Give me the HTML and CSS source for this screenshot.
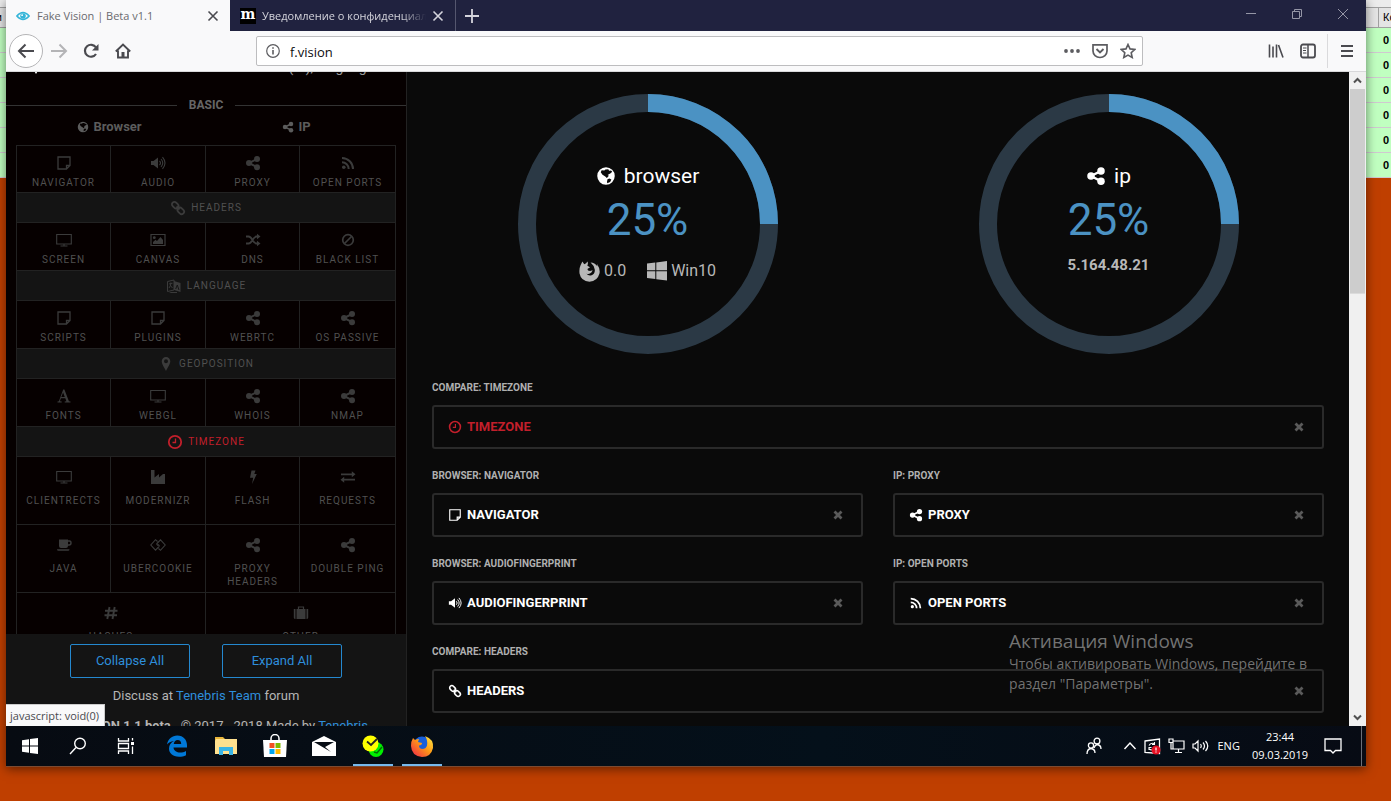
FILE: index.html
```html
<!DOCTYPE html>
<html lang="ru">
<head>
<meta charset="utf-8">
<title>Fake Vision | Beta v1.1</title>
<link rel="stylesheet" href="styles.css">
</head>
<body>
<svg class="sprite" aria-hidden="true">
  <symbol id="note" viewBox="0 0 16 16"><path d="M2 2h12v8.500l-3.500 3.500H2zM14 10.500h-3.500V14" fill="none" stroke="currentColor" stroke-width="1.300"/></symbol>
  <symbol id="audio" viewBox="0 0 16 16"><path d="M1 6h2.500L8 2.500v11L3.500 10H1z" fill="currentColor"/><path d="M9.500 6q2 2 0 4M11 4q3.500 4 0 8M12.500 2.200q5 5.800 0 11.600" fill="none" stroke="currentColor" stroke-width="1.100"/></symbol>
  <symbol id="share" viewBox="0 0 16 16"><g fill="currentColor"><circle cx="4" cy="8" r="3"/><circle cx="12" cy="4" r="3"/><circle cx="12" cy="12.200" r="3"/></g><path d="M12 4 4 8l8 4.200" fill="none" stroke="currentColor" stroke-width="2"/></symbol>
  <symbol id="rss" viewBox="0 0 16 16"><circle cx="3.800" cy="12.200" r="1.800" fill="currentColor"/><path d="M2 7.300a6.700 6.700 0 0 1 6.700 6.700M2 3a11 11 0 0 1 11 11" fill="none" stroke="currentColor" stroke-width="2"/></symbol>
  <symbol id="link" viewBox="0 0 16 16"><g fill="none" stroke="currentColor" stroke-width="1.800"><rect x="1.600" y="2.600" width="7.200" height="5" rx="2.500" transform="rotate(45 5.200 5.100)"/><rect x="7.200" y="8.400" width="7.200" height="5" rx="2.500" transform="rotate(45 10.800 10.900)"/><path d="m6.500 6.500 3 3"/></g></symbol>
  <symbol id="screen" viewBox="0 0 16 16"><path d="M.700 2.500h14.600v9.500H.700zM8 12v2M4.500 14h7" fill="none" stroke="currentColor" stroke-width="1.100"/></symbol>
  <symbol id="image" viewBox="0 0 16 16"><path d="M1 2.500h14v11H1z" fill="none" stroke="currentColor" stroke-width="1.200"/><circle cx="4.300" cy="5.700" r="1.400" fill="currentColor"/><path d="M3 12V10l2.500-2.300L7 9l3.500-4L13 8v4z" fill="currentColor"/></symbol>
  <symbol id="shuffle" viewBox="0 0 16 16"><path d="M1 4.500h2.500c4 0 4 7 8 7H13M1 11.500h2.500c4 0 4-7 8-7H13" fill="none" stroke="currentColor" stroke-width="1.800"/><path d="M12 1.700 15.500 4.500 12 7.300zM12 8.700l3.500 2.800-3.500 2.800z" fill="currentColor"/></symbol>
  <symbol id="ban" viewBox="0 0 16 16"><circle cx="8" cy="8" r="5.300" fill="none" stroke="currentColor" stroke-width="1.700"/><path d="m4.500 11.500 7-7" stroke="currentColor" stroke-width="1.700"/></symbol>
  <symbol id="lang" viewBox="0 0 16 16"><path d="M1.500 3.500 8 2v10l-6.500 1.500z" fill="none" stroke="currentColor"/><path d="M8 3l6.500 2v9L8 12zM3 15h8v-1H5z" fill="currentColor"/><path d="m3 6 3.500-.800M4.800 4.500Q5 8 3 10M4 7l2.500 3" stroke="currentColor" fill="none"/><path d="m9.700 11 1.600-4 1.700 5" stroke="#141414" fill="none"/></symbol>
  <symbol id="pin" viewBox="0 0 16 16"><path d="M8 1a4.300 4.300 0 0 0-4.300 4.300C3.700 8 6.500 12 8 15c1.500-3 4.300-7 4.300-9.700A4.300 4.300 0 0 0 8 1zm0 6.300a2 2 0 1 1 0-4 2 2 0 0 1 0 4z" fill="currentColor"/></symbol>
  <symbol id="font" viewBox="0 0 16 16"><path d="M7.200 1.500h1.200l4.500 11.700 1.600.400v.900H8.700v-.900l1.700-.400-1.100-3H4.900l-1 3 1.800.400v.900H1.500v-.900l1.400-.400zm-.100 2.900L5.300 9h3.500z" fill="currentColor"/></symbol>
  <symbol id="clock" viewBox="0 0 16 16"><circle cx="8" cy="8" r="6.200" fill="none" stroke="currentColor" stroke-width="1.800"/><path d="M8.500 4.500v4H5.500" fill="none" stroke="currentColor" stroke-width="1.300"/></symbol>
  <symbol id="industry" viewBox="0 0 16 16"><path d="M1 15V1h3.500v7.500L9 5v3.500L13 5h2v10z" fill="currentColor"/></symbol>
  <symbol id="bolt" viewBox="0 0 16 16"><path d="M6.500 1.500h4L9.300 5h2.500L7 15l1.200-6.300H5z" fill="currentColor"/></symbol>
  <symbol id="exchange" viewBox="0 0 16 16"><path d="M1 5.300h12M3 10.700h12" stroke="currentColor" stroke-width="1.800"/><path d="m11.800 2.300 3.700 3-3.700 3zM4.200 7.700.500 10.700l3.700 3z" fill="currentColor"/></symbol>
  <symbol id="coffee" viewBox="0 0 16 16"><path d="M3 2.500h9V9q0 2-2 2H5q-2 0-2-2zM1 12.300h12.500q0 1.500-1.500 1.500H2.500Q1 13.800 1 12.300z" fill="currentColor"/><path d="M12 4h1.500q1.500 0 1.500 2t-2 2h-1" fill="none" stroke="currentColor" stroke-width="1.400"/></symbol>
  <symbol id="cookie" viewBox="0 0 16 16"><path d="M7.500 4.500 5.500 2.700.800 8l4.700 5.200L9.500 9M8.500 11.500l2 1.800L15.200 8l-4.700-5.200L6.500 7M9.500 9 8 7.500M6.500 7 8 8.500" fill="none" stroke="currentColor" stroke-width="1.100"/></symbol>
  <symbol id="hash" viewBox="0 0 16 16"><path d="M6.500 2 4.300 14M11.700 2 9.500 14M2 5.800h12.500M1.500 10.200H14" stroke="currentColor" stroke-width="1.900"/></symbol>
  <symbol id="case" viewBox="0 0 16 16"><path d="M.800 4h1.700v10q-1.700 0-1.700-1.500zM3.500 4h9v10h-9zM13.500 4h1.700v8.500q0 1.500-1.700 1.500z" fill="currentColor"/><path d="M5.500 4V2h5v2" fill="none" stroke="currentColor" stroke-width="1.200"/></symbol>
  <symbol id="globe" viewBox="0 0 16 16"><path fill-rule="evenodd" d="M8 1a7 7 0 1 1 0 14A7 7 0 0 1 8 1zM4.500 3.300 3.800 5l1.400 2 2.200 1.300 1.300 1.200 1.600-1.700-1-.700 2.400-1.400L13 4.500l-1-1-1.500.300-.700-1.300-2.300.200-.800.800zM9.200 10.500l-.400 2 .200 1.300 2.300-1 1-2-1.600-.900z" fill="currentColor"/></symbol>
  <symbol id="fox" viewBox="0 0 20 20"><path d="M3.200.500 5 3q2-.500 3-2.500Q9 2 8 4.500L10.500 6 8 7.500q0 2 2.500 2l2.500-.700-1 2q-2.500 2.700-5 1Q9 14.500 12 13.500q3.500-1.500 3-5.500-.500-3.500-4-6.500 4 .200 6.500 3.500L17 2.500q3.500 5 2.500 9.500-2 7.500-9.500 7.800Q2 19.500.500 12 0 7 1.500 4z" fill="currentColor"/></symbol>
  <symbol id="win" viewBox="0 0 20 20"><path d="M0 2.500 8.300 1.500v7.700H0zM9.300 1.400 20 0v9.200H9.300zM0 10.200h8.300V18L0 17zM9.300 10.200H20V19.600L9.300 18.200z" fill="currentColor"/></symbol>
  <symbol id="times" viewBox="0 0 10 10"><path d="m1.500 1.500 7 7m0-7-7 7" stroke="currentColor" stroke-width="2.800"/></symbol>
  <symbol id="close" viewBox="0 0 12 12"><path d="m1.500 1.500 9 9m0-9-9 9" stroke="currentColor" stroke-width="1.600"/></symbol>
</svg>

<table class="sheet">
  <colgroup><col class="col-edge"><col><col class="col-count"></colgroup>
  <thead>
    <tr class="strip"><td></td><td></td><td></td></tr>
    <tr><th><div class="tail">и</div></th><th></th><th class="count">Количество</th></tr>
  </thead>
  <tbody>
    <tr><td></td><td></td><td class="count">0</td></tr>
    <tr><td></td><td></td><td class="count">0</td></tr>
    <tr><td></td><td></td><td class="count">0</td></tr>
    <tr><td></td><td></td><td class="count">0</td></tr>
    <tr><td></td><td></td><td class="count">0</td></tr>
    <tr><td></td><td></td><td class="count">0</td></tr>
  </tbody>
</table>

<div class="window">
  <header class="tabs">
    <div class="tab active">
      <svg class="favicon" viewBox="0 0 16 16"><path d="M1 8q7-8 14 0-7 8-14 0z" fill="none" stroke="#35b5d8" stroke-width="1.800"/><circle cx="8" cy="8" r="3.200" fill="#35b5d8"/><circle cx="7" cy="7" r="1" fill="#fff"/></svg>
      <span class="tab-title">Fake Vision | Beta v1.1</span>
      <button class="icon-btn" aria-label="Закрыть вкладку"><svg width="12" height="12"><use href="#close"/></svg></button>
    </div>
    <div class="tab">
      <span class="favicon m-logo">m</span>
      <span class="tab-title faded">Уведомление о конфиденциальности</span>
      <button class="icon-btn" aria-label="Закрыть вкладку"><svg width="12" height="12"><use href="#close"/></svg></button>
    </div>
    <button class="icon-btn new-tab" aria-label="Новая вкладка"><svg width="14" height="14" viewBox="0 0 14 14"><path d="M7 0v14M0 7h14" stroke="currentColor" stroke-width="1.800"/></svg></button>
    <div class="controls">
      <button class="icon-btn" aria-label="Свернуть"><svg width="12" height="12" viewBox="0 0 12 12"><path d="M1 5.500h10" stroke="currentColor"/></svg></button>
      <button class="icon-btn" aria-label="Восстановить"><svg width="12" height="12" viewBox="0 0 12 12"><path d="M1.500 3.500h7v7h-7zM3.500 3.500v-2h7v7h-2" fill="none" stroke="currentColor"/></svg></button>
      <button class="icon-btn" aria-label="Закрыть"><svg width="12" height="12" viewBox="0 0 12 12"><path d="m1 1 10 10M11 1 1 11" stroke="currentColor"/></svg></button>
    </div>
  </header>

  <div class="toolbar">
    <div class="nav-buttons">
      <button class="icon-btn back" aria-label="Назад"><svg width="18" height="16" viewBox="0 0 18 16"><path d="M17 8H2M8.500 1.500 2 8l6.500 6.500" fill="none" stroke="currentColor" stroke-width="2"/></svg></button>
      <button class="icon-btn forward" aria-label="Вперёд"><svg width="18" height="16" viewBox="0 0 18 16"><path d="M1 8h15M9.500 1.500 16 8l-6.500 6.500" fill="none" stroke="currentColor" stroke-width="2"/></svg></button>
      <button class="icon-btn" aria-label="Обновить"><svg width="16" height="16" viewBox="0 0 16 16"><path d="M13 11A6 6 0 1 1 13 4.500" fill="none" stroke="currentColor" stroke-width="2.200"/><path d="M15.500 1v6.500H9z" fill="currentColor"/></svg></button>
      <button class="icon-btn" aria-label="Домой"><svg width="16" height="16" viewBox="0 0 16 16"><path d="M.800 8.500 8 1.500l7.200 7M3 7.500v7h10v-7" fill="none" stroke="currentColor" stroke-width="1.900"/><path d="M6.500 9h3v5.500h-3z" fill="currentColor"/></svg></button>
    </div>
    <div class="urlbar">
      <svg width="14" height="14" viewBox="0 0 14 14"><circle cx="7" cy="7" r="6.300" fill="none" stroke="currentColor" stroke-width="1.200"/><path d="M7 3.300v1.500M7 6v4.500" stroke="currentColor" stroke-width="1.600"/></svg>
      <input type="text" value="f.vision" aria-label="Адрес">
      <button class="icon-btn" aria-label="Действия"><svg width="16" height="16" viewBox="0 0 16 16"><g fill="currentColor"><circle cx="2" cy="8" r="1.900"/><circle cx="8" cy="8" r="1.900"/><circle cx="14" cy="8" r="1.900"/></g></svg></button>
      <button class="icon-btn" aria-label="Pocket"><svg width="16" height="16" viewBox="0 0 16 16"><path d="M1 1.800h14V8a7 6.500 0 0 1-14 0z" fill="none" stroke="currentColor" stroke-width="1.700"/><path d="m4.500 6 3.500 3.500L11.500 6" fill="none" stroke="currentColor" stroke-width="1.900"/></svg></button>
      <button class="icon-btn" aria-label="Закладка"><svg width="16" height="16" viewBox="0 0 16 16"><path d="m8 1.500 2 4.400 4.800.500-3.600 3.300 1 4.800L8 12.100l-4.200 2.400 1-4.800L1.200 6.400 6 5.900z" fill="none" stroke="currentColor" stroke-width="1.600"/></svg></button>
    </div>
    <div class="tools">
      <button class="icon-btn" aria-label="Библиотека"><svg width="16" height="16" viewBox="0 0 16 16"><path d="M1.500 1.500v13M5 3.500v11M8.500 1.500v13M10.500 2l4.500 12.500" stroke="currentColor" stroke-width="1.600"/></svg></button>
      <button class="icon-btn" aria-label="Боковая панель"><svg width="16" height="16" viewBox="0 0 16 16"><rect x="1" y="1.500" width="14" height="13" rx="2" fill="none" stroke="currentColor" stroke-width="1.800"/><path d="M8 2v12" stroke="currentColor" stroke-width="1.500"/><path d="M3 5h3.500M3 7.500h3M3 10h3.500" stroke="currentColor"/></svg></button>
      <button class="icon-btn menu" aria-label="Меню"><svg width="14" height="14" viewBox="0 0 14 14"><path d="M1 2h12M1 7h12M1 12h12" stroke="currentColor" stroke-width="1.800"/></svg></button>
    </div>
  </div>

  <div class="viewport">
    <aside class="sidebar">
      <div class="side-scroll">
        <div class="lang-row"><svg width="6" height="6" viewBox="0 0 6 6"><path d="M0 0h6L3 5z" fill="#fff"/></svg><span>(ru), language</span></div>
        <h3 class="rule">BASIC</h3>
        <div class="groups">
          <span><svg width="12" height="12"><use href="#globe"/></svg>Browser</span>
          <span><svg width="12" height="12"><use href="#share"/></svg>IP</span>
        </div>
        <nav class="tiles">
          <a class="first" href="#n"><svg><use href="#note"/></svg>NAVIGATOR</a>
          <a class="first" href="#a"><svg><use href="#audio"/></svg>AUDIO</a>
          <a class="first" href="#p"><svg><use href="#share"/></svg>PROXY</a>
          <a class="first" href="#o"><svg><use href="#rss"/></svg>OPEN PORTS</a>
          <a class="wide" href="#h"><svg><use href="#link"/></svg>HEADERS</a>
          <a href="#s"><svg><use href="#screen"/></svg>SCREEN</a>
          <a href="#c"><svg><use href="#image"/></svg>CANVAS</a>
          <a href="#d"><svg><use href="#shuffle"/></svg>DNS</a>
          <a href="#b"><svg><use href="#ban"/></svg>BLACK LIST</a>
          <a class="wide" href="#l"><svg><use href="#lang"/></svg>LANGUAGE</a>
          <a href="#sc"><svg><use href="#note"/></svg>SCRIPTS</a>
          <a href="#pl"><svg><use href="#note"/></svg>PLUGINS</a>
          <a href="#w"><svg><use href="#share"/></svg>WEBRTC</a>
          <a href="#os"><svg><use href="#share"/></svg>OS PASSIVE</a>
          <a class="wide" href="#g"><svg><use href="#pin"/></svg>GEOPOSITION</a>
          <a href="#f"><svg><use href="#font"/></svg>FONTS</a>
          <a href="#gl"><svg><use href="#screen"/></svg>WEBGL</a>
          <a href="#wh"><svg><use href="#share"/></svg>WHOIS</a>
          <a href="#nm"><svg><use href="#share"/></svg>NMAP</a>
          <a class="wide alert" href="#tz"><svg><use href="#clock"/></svg>TIMEZONE</a>
          <a class="tall" href="#cr"><svg><use href="#screen"/></svg>CLIENTRECTS</a>
          <a class="tall" href="#mo"><svg><use href="#industry"/></svg>MODERNIZR</a>
          <a class="tall" href="#fl"><svg><use href="#bolt"/></svg>FLASH</a>
          <a class="tall" href="#re"><svg><use href="#exchange"/></svg>REQUESTS</a>
          <a class="tall" href="#ja"><svg><use href="#coffee"/></svg>JAVA</a>
          <a class="tall" href="#ub"><svg><use href="#cookie"/></svg>UBERCOOKIE</a>
          <a class="tall" href="#ph"><svg><use href="#share"/></svg><span>PROXY<br>HEADERS</span></a>
          <a class="tall" href="#dp"><svg><use href="#share"/></svg>DOUBLE PING</a>
          <a class="tall half" href="#ha"><svg><use href="#hash"/></svg>HASHES</a>
          <a class="tall half" href="#ot"><svg><use href="#case"/></svg>OTHER</a>
        </nav>
      </div>
      <footer class="side-footer">
        <div class="actions"><button>Collapse All</button><button>Expand All</button></div>
        <p>Discuss at <a href="#team">Tenebris Team</a> forum</p>
        <p class="credits"><b>FAKE VISION 1.1 beta</b> - © 2017 - 2018 Made by <a href="#team">Tenebris</a></p>
      </footer>
      <div class="status">javascript: void(0)</div>
    </aside>

    <main class="content">
      <div class="gauges">
        <section class="gauge">
          <svg width="260" height="260" viewBox="0 0 260 260"><circle cx="130" cy="130" r="121" fill="none" stroke="#2b3945" stroke-width="18"/><path d="M130 9a121 121 0 0 1 121 121" fill="none" stroke="#4b92c3" stroke-width="18"/></svg>
          <div class="gauge-text">
            <h2><svg width="20" height="20"><use href="#globe"/></svg>browser</h2>
            <div class="percent">25%</div>
            <div class="meta"><span><svg width="21" height="21"><use href="#fox"/></svg>0.0</span><span><svg width="20" height="20"><use href="#win"/></svg>Win10</span></div>
          </div>
        </section>
        <section class="gauge">
          <svg width="260" height="260" viewBox="0 0 260 260"><circle cx="130" cy="130" r="121" fill="none" stroke="#2b3945" stroke-width="18"/><path d="M130 9a121 121 0 0 1 121 121" fill="none" stroke="#4b92c3" stroke-width="18"/></svg>
          <div class="gauge-text">
            <h2><svg width="20" height="20"><use href="#share"/></svg>ip</h2>
            <div class="percent">25%</div>
            <div class="address">5.164.48.21</div>
          </div>
        </section>
      </div>
      <div class="panels">
        <section class="panel full"><h3>COMPARE: TIMEZONE</h3><div class="card alert"><svg width="14" height="14"><use href="#clock"/></svg><span>TIMEZONE</span><button class="icon-btn" aria-label="Close"><svg width="10" height="10"><use href="#times"/></svg></button></div></section>
        <section class="panel"><h3>BROWSER: NAVIGATOR</h3><div class="card"><svg width="14" height="14"><use href="#note"/></svg><span>NAVIGATOR</span><button class="icon-btn" aria-label="Close"><svg width="10" height="10"><use href="#times"/></svg></button></div></section>
        <section class="panel"><h3>IP: PROXY</h3><div class="card"><svg width="14" height="14"><use href="#share"/></svg><span>PROXY</span><button class="icon-btn" aria-label="Close"><svg width="10" height="10"><use href="#times"/></svg></button></div></section>
        <section class="panel"><h3>BROWSER: AUDIOFINGERPRINT</h3><div class="card"><svg width="14" height="14"><use href="#audio"/></svg><span>AUDIOFINGERPRINT</span><button class="icon-btn" aria-label="Close"><svg width="10" height="10"><use href="#times"/></svg></button></div></section>
        <section class="panel"><h3>IP: OPEN PORTS</h3><div class="card"><svg width="14" height="14"><use href="#rss"/></svg><span>OPEN PORTS</span><button class="icon-btn" aria-label="Close"><svg width="10" height="10"><use href="#times"/></svg></button></div></section>
        <section class="panel full"><h3>COMPARE: HEADERS</h3><div class="card"><svg width="14" height="14"><use href="#link"/></svg><span>HEADERS</span><button class="icon-btn" aria-label="Close"><svg width="10" height="10"><use href="#times"/></svg></button></div></section>
      </div>
    </main>

    <div class="scrollbar">
      <svg width="17" height="17" viewBox="0 0 17 17"><path d="m5 10.500 3.500-3.500 3.500 3.500" fill="none" stroke="#505050" stroke-width="2"/></svg>
      <div class="thumb"></div>
      <svg width="17" height="17" viewBox="0 0 17 17"><path d="M5 6.500 8.500 10 12 6.500" fill="none" stroke="#505050" stroke-width="2"/></svg>
    </div>
    <div class="watermark"><div class="wm-title">Активация Windows</div>Чтобы активировать Windows, перейдите в<br>раздел "Параметры".</div>
  </div>

  <footer class="taskbar">
    <div class="system">
      <button aria-label="Пуск"><svg width="16" height="16" viewBox="0 0 16 16" fill="#fff"><path d="M0 2.200 7 1.200V7.500H0zM8 1 16 0v7.500H8zM0 8.500h7v6.300L0 13.800zM8 8.500h8V16L8 15z"/></svg></button>
      <button aria-label="Поиск"><svg width="18" height="18" viewBox="0 0 18 18" fill="none" stroke="#fff" stroke-width="1.400"><circle cx="11" cy="6.500" r="5.300"/><path d="M7 10.500 1 17"/></svg></button>
      <button aria-label="Представление задач"><svg width="18" height="18" viewBox="0 0 18 18" fill="none" stroke="#fff" stroke-width="1.300"><path d="M1.500 1v3h10V1M1.500 17v-3h10v3M1.500 6.500h10v5h-10zM15.500 1v2.500M15.500 9.500V17"/><path d="M14 5h3v3h-3z" fill="#fff" stroke="none"/></svg></button>
    </div>
    <div class="apps">
      <button aria-label="Edge"><svg width="22" height="22" viewBox="0 0 22 22"><path d="M1 9.500C2 4 6 .500 11.300.500 17.500.500 21 5 21 10v2.500H7.500c.300 3.500 3.500 5 6.500 5 2.300 0 4.300-.600 6-1.600v4.300c-2 1-4.500 1.500-7 1.500C6.500 21.700 3 18 3 13.500c0-3.500 2-6 5-7.500C4.500 6.300 2.500 8 1 9.500zM7.700 9h7.500c0-2.500-1.300-4-3.500-4S8.300 6.500 7.700 9z" fill="#0078d7"/></svg></button>
      <button aria-label="Проводник"><svg width="22" height="20" viewBox="0 0 22 20"><path d="M0 1h8l2 2h12v15H0z" fill="#e8b53a"/><path d="M1 3h21v15H0V5z" fill="#ffe18f"/><path d="M4 19v-8h14v8h-4v-4H8v4z" fill="#3ab5e6"/></svg></button>
      <button aria-label="Магазин"><svg width="24" height="24" viewBox="0 0 24 24"><path d="M8 8V4.500a4 4 0 0 1 8 0V8" fill="none" stroke="#fff" stroke-width="1.500"/><path d="M0 6h24l-1 17H1z" fill="#fff"/><path d="M6.500 9h5v5h-5z" fill="#f25022"/><path d="M12.500 9h5v5h-5z" fill="#7fba00"/><path d="M6.500 15h5v5h-5z" fill="#00a4ef"/><path d="M12.500 15h5v5h-5z" fill="#ffb900"/></svg></button>
      <button aria-label="Почта"><svg width="24" height="20" viewBox="0 0 24 20"><path d="M0 6 12 0l12 6v14H0z" fill="#fff"/><path d="M2 6h20l-9 5 6 5z" fill="#070d15"/></svg></button>
      <button class="running" aria-label="Punto Switcher"><svg width="22" height="22" viewBox="0 0 22 22"><circle cx="14" cy="14.500" r="7.500" fill="#00f000"/><path d="m12 17 3 1 5-6" fill="none" stroke="#056b05" stroke-width="1.500"/><circle cx="8.500" cy="8.500" r="8" fill="#ff0"/><path d="M5 6.500 9 10l6-6" fill="none" stroke="#222" stroke-width="1.800"/></svg></button>
      <button class="running" aria-label="Firefox"><svg width="24" height="24" viewBox="0 0 24 24"><defs><linearGradient id="ffg" x1="1" y1="0" x2="0" y2="1"><stop offset="0" stop-color="#fff04a"/><stop offset=".45" stop-color="#ff9a16"/><stop offset="1" stop-color="#ef1f4c"/></linearGradient></defs><circle cx="12" cy="11" r="8.500" fill="#175fdc"/><path d="M3 4q1 1 2 2 2-1 4-1L8 8l4 1q0 2-3 2.500 0 3 3 3.500 4 0 5-3.500Q18 6 15 2q9 3 8 12-2 9-11 9Q1.500 22 1 12q0-5 2-8z" fill="url(#ffg)"/></svg></button>
    </div>
    <div class="tray">
      <svg width="16" height="18" viewBox="0 0 16 18" fill="none" stroke="#fff" stroke-width="1.300"><circle cx="5" cy="8.500" r="2.600"/><path d="M1 17q0-5 4-5.500Q9 12 9 16"/><circle cx="11" cy="4" r="2.900"/><path d="M8 11q1-3 3-3.500Q15 8 15 12"/></svg>
      <svg class="chevron" width="14" height="14" viewBox="0 0 14 14" fill="none" stroke="#fff" stroke-width="1.400"><path d="m1.500 10 5.500-6 5.500 6"/></svg>
      <svg width="17" height="17" viewBox="0 0 17 17"><path d="M1 3 15.500 1v14.500L1 14.500z" fill="none" stroke="#fff" stroke-width="1.300"/><path d="M5 7.500q1.500-3 5-2M10.500 4v2.500H8M5 12V9.500h2.500M5 11q2 1.500 4 .500" stroke="#fff" fill="none" stroke-width="1.100"/><circle cx="12" cy="12" r="4.500" fill="#e81123"/><path d="M12 9.500v3M12 13.500v1" stroke="#fff" stroke-width="1.200"/></svg>
      <svg width="17" height="16" viewBox="0 0 17 16" fill="none" stroke="#fff" stroke-width="1.200"><path d="M5 3h11v8H5zM10.500 11v3.500M7 14.500h7M1 1h4v3.500H1zM3 4.500V11h2"/></svg>
      <svg width="18" height="16" viewBox="0 0 18 16" fill="none" stroke="#fff" stroke-width="1.200"><path d="M1 6h2l3-3v10l-3-3H1zM8.500 6q1.500 2 0 4M11 4.500q3 3.500 0 7M13.500 3q4.500 5 0 10"/></svg>
      <span class="layout">ENG</span>
      <div class="time">23:44<br>09.03.2019</div>
      <svg class="bell" width="18" height="18" viewBox="0 0 18 18" fill="none" stroke="#fff" stroke-width="1.300"><path d="M1 2h16v11.500h-5.500L9 16l-2.500-2.500H1z"/></svg>
      <div class="peek"></div>
    </div>
  </footer>
</div>
</body>
</html>
```
FILE: styles.css
```css
* { box-sizing: border-box; }
body {
  margin: 0;
  height: 100vh;
  position: relative;
  overflow: hidden;
  background: #bf3f00;
  font: 13px/16px "Open Sans", "Noto Sans", sans-serif;
}
button, input { font: inherit; color: inherit; }
button { background: none; border: 0; padding: 0; }
a { color: inherit; text-decoration: none; }
h2, h3, p { margin: 0; }
svg { display: block; flex: none; }
.sprite { position: absolute; width: 0; height: 0; }
.icon-btn { display: flex; align-items: center; justify-content: center; flex: none; }

.sheet { width: 100%; table-layout: fixed; border-collapse: separate; border-spacing: 0; font: 11px/13px "Liberation Sans", sans-serif; }
.col-edge { width: 6px; }
.col-count { width: 13px; }
.sheet tr { height: 25px; background: #c0ffc0; }
.sheet td, .sheet th { padding: 0; border-bottom: 1px solid #d0c8d0; overflow: hidden; white-space: nowrap; font-weight: normal; }
.sheet thead tr { height: 20px; background: #e4e4e4; }
.sheet thead .strip { height: 8px; background: #ececec; }
.sheet thead td, .sheet thead th { border-bottom-color: #a0a0a0; }
.sheet .count { padding-left: 4px; text-align: left; }
.sheet td.count { padding-left: 5px; font-weight: bold; }
.sheet th.count { border-left: 1px solid #a0a0a0; }
.tail { display: flex; justify-content: flex-end; padding-right: 4px; }

.window {
  position: absolute;
  inset: 0 25px 34px 6px;
  display: flex;
  flex-direction: column;
  background: #0a0a0a;
  border-bottom: 1px solid #7d4a30;
  box-shadow: 0 2px 10px rgba(0, 0, 0, .5);
}

.tabs { display: flex; flex: 0 0 31px; background: #20223f; color: #d4d4dc; font-size: 12px; }
.tab { display: flex; align-items: center; width: 226px; padding: 0 5px 0 10px; border-right: 1px solid #55576f; }
.tab.active { width: 224px; background: #f9f9fa; color: #6a6a6e; border: 0; }
.tab .icon-btn { width: 24px; height: 24px; color: #d4d4dc; }
.tab.active .icon-btn { color: #4a4a4f; }
.favicon { width: 16px; height: 16px; margin-right: 6px; flex: none; }
.active .favicon { width: 14px; height: 14px; margin-right: 7px; }
.m-logo { background: #000; color: #fff; font: bold 14px/12px "DejaVu Serif", serif; text-align: center; }
.tab-title { flex: 1; min-width: 0; overflow: hidden; white-space: nowrap; font-size: 11px; }
.faded { mask-image: linear-gradient(90deg, #000 85%, transparent); }
.new-tab { width: 32px; }
.controls { display: flex; margin-left: auto; color: #9596a6; padding-bottom: 3px; }
.controls .icon-btn { width: 46px; }

.toolbar { display: flex; align-items: center; flex: 0 0 41px; background: #f9f9fa; border-bottom: 1px solid #d8d8da; color: #4a4a4f; }
.nav-buttons { display: flex; align-items: center; width: 250px; padding-left: 3px; }
.nav-buttons .icon-btn { width: 32px; height: 32px; }
.nav-buttons .back { width: 34px; height: 34px; border: 1px solid #b5b5b7; border-radius: 50%; background: #fff; }
.nav-buttons .forward { color: #b4b4b6; }
.urlbar { display: flex; flex: 1; align-items: center; height: 30px; padding: 0 6px 0 9px; background: #fff; border: 1px solid #bdbdbf; border-radius: 2px; color: #5c5c60; }
.urlbar input { flex: 1; min-width: 0; border: 0; outline: 0; padding: 2px 10px 0; color: #0c0c0d; background: none; font-size: 13px; }
.urlbar .icon-btn { width: 16px; height: 24px; margin-left: 12px; }
.tools { display: flex; width: 223px; justify-content: flex-end; }
.tools .icon-btn { width: 32px; height: 34px; }
.tools .menu { width: 39px; margin-left: 3px; border-left: 1px solid #dadadc; }

.viewport { position: relative; display: flex; flex: 1; min-height: 0; font-family: Roboto, sans-serif; }
.sidebar { position: relative; display: flex; flex-direction: column; width: 401px; flex: none; background: #060000; border-right: 1px solid #222; overflow: hidden; }
.side-scroll { flex: 1; min-height: 0; overflow: hidden; }
.lang-row { display: flex; justify-content: space-between; align-items: flex-end; margin-top: -13px; padding: 0 32px 0 27px; color: #9a9a9a; font-size: 14px; }
.rule { display: flex; align-items: center; gap: 12px; margin-top: 22px; color: #666; font-size: 12px; }
.rule::before, .rule::after { content: ""; flex: 1; border-top: 1px solid #333; }
.groups { display: grid; grid-template-columns: 1fr 1fr; margin: 6px 16px 10px 10px; color: #5c5c5c; font-weight: bold; }
.groups span { display: flex; align-items: center; justify-content: center; gap: 4px; font-size: 13px; }
.tiles { display: grid; grid-template-columns: 94fr 95fr 94fr 96fr; margin: 0 10px; border: solid #222; border-width: 1px 0 0 1px; color: #505050; font-size: 10px; line-height: 13px; letter-spacing: 1px; text-align: center; }
.tiles a { display: flex; flex-direction: column; align-items: center; gap: 5px; height: 48px; padding: 9px 2px 0; border: solid #222; border-width: 0 1px 1px 0; }
.tiles .first { height: 47px; }
.tiles svg { width: 16px; height: 16px; color: #3b3b3b; }
.tiles .wide { grid-column: span 4; flex-direction: row; justify-content: center; gap: 5px; height: 30px; padding: 0; background: #141414; }
.tiles .tall { height: 68px; padding-top: 12px; gap: 9px; }
.tiles .half { grid-column: span 2; }
.tiles .alert, .tiles .alert svg, .alert { color: #c21f2b; }

.side-footer { flex: 0 0 92px; overflow: hidden; padding-top: 10px; background: #141414; color: #b5b5b5; text-align: center; }
.actions { display: flex; justify-content: center; gap: 32px; margin-bottom: 10px; }
.actions button { width: 120px; height: 34px; border: 1px solid #2488cf; border-radius: 2px; color: #2e8edb; }
.side-footer a { color: #2e8edb; }
.side-footer .credits { margin-top: 14px; white-space: nowrap; }
.status { position: absolute; left: 0; bottom: 0; padding: 3px 5px 2px 4px; background: #f9f9fa; border: 1px solid #ccc; border-width: 1px 1px 0 0; color: #4a4a4f; font: 11px/16px "Open Sans", sans-serif; }

.content { flex: 1; min-width: 0; padding: 22px 25px; overflow: hidden; background: #0a0a0a; }
.gauges { display: grid; grid-template-columns: 1fr 1fr; gap: 30px; justify-items: center; padding-bottom: 7px; }
.gauge { position: relative; }
.gauge-text { position: absolute; inset: 0; padding-top: 70px; display: flex; flex-direction: column; align-items: center; color: #b8b8b8; }
.gauge h2 { display: flex; align-items: center; gap: 8px; font-size: 21px; line-height: 24px; font-weight: normal; color: #fff; }
.percent { margin-top: 8px; font-size: 44px; line-height: 48px; color: #4b92c3; }
.meta { display: flex; gap: 21px; margin-top: 15px; font-size: 16px; line-height: 24px; }
.meta span { display: flex; align-items: center; gap: 4px; }
.address { margin-top: 9px; font-size: 15px; line-height: 24px; font-weight: bold; }
.panels { display: grid; grid-template-columns: 1fr 1fr; column-gap: 30px; }
.panel { padding-top: 20px; }
.panel.full { grid-column: span 2; }
.panel h3 { margin-bottom: 10px; font-size: 10px; line-height: 14px; color: #b0b0b0; }
.card { display: flex; align-items: center; gap: 5px; height: 44px; padding: 0 18px 0 14px; border: 2px solid #2a2a2a; border-radius: 3px; color: #fff; font-size: 13px; font-weight: bold; }
.card.alert { color: #c21f2b; }
.card .icon-btn { margin-left: auto; color: #5a5a5a; }

.scrollbar { display: flex; flex-direction: column; flex: 0 0 17px; background: #f0f0f0; }
.thumb { flex: 1; margin: 0 1px; background: linear-gradient(#cdcdcd, #cdcdcd) no-repeat 0 0 / 100% 33%; }
.watermark { position: absolute; right: 59px; bottom: 32px; color: rgba(150, 150, 150, .75); font: 14px/20px "Open Sans", sans-serif; pointer-events: none; }
.wm-title { font-size: 19px; line-height: 26px; }

.taskbar { display: flex; flex: 0 0 40px; background: linear-gradient(90deg, #070b12, #04101a 60%, #070b14); color: #fff; }
.taskbar button { width: 40px; display: flex; align-items: center; justify-content: center; }
.system { display: flex; gap: 8px; padding-left: 4px; }
.apps { display: flex; gap: 9px; margin-left: 11px; }
.taskbar .running { border: solid #76b9ed; border-width: 0 0 2px; padding-top: 2px; }
.tray { display: flex; align-items: center; gap: 7px; margin-left: auto; font-size: 11px; }
.chevron { margin-left: 14px; }
.time { margin: 0 9px 0 5px; text-align: center; line-height: 18px; }
.bell { margin-right: 12px; }
.peek { width: 5px; height: 40px; border-left: 1px solid #6b7078; }
```
